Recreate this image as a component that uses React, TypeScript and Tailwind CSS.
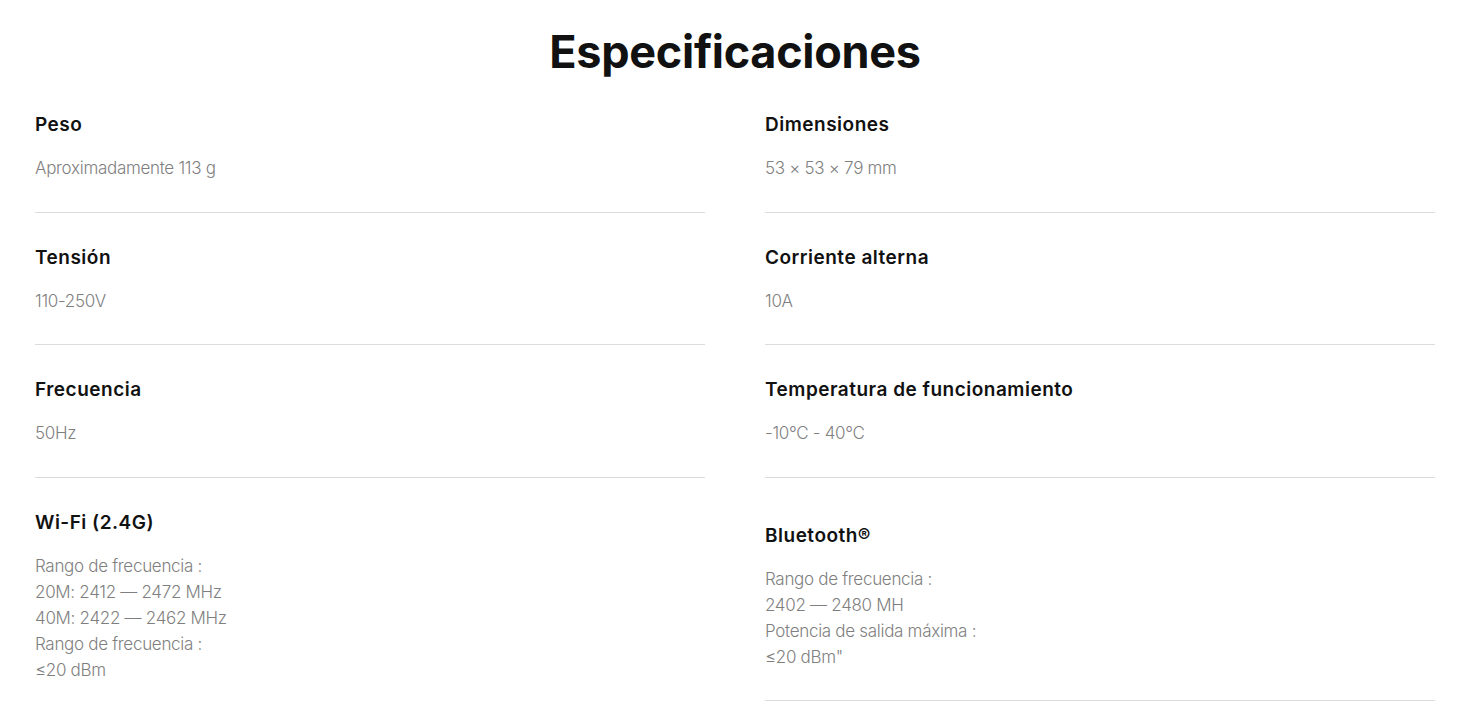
const specs = [
  { label: "Peso", lines: ["Aproximadamente 113 g"] },
  { label: "Dimensiones", lines: ["53 × 53 × 79 mm"] },
  { label: "Tensión", lines: ["110-250V"] },
  { label: "Corriente alterna", lines: ["10A"] },
  { label: "Frecuencia", lines: ["50Hz"] },
  { label: "Temperatura de funcionamiento", lines: ["-10°C - 40°C"] },
  {
    label: "Wi-Fi (2.4G)",
    lines: [
      "Rango de frecuencia :",
      "20M: 2412 — 2472 MHz",
      "40M: 2422 — 2462 MHz",
      "Rango de frecuencia :",
      "≤20 dBm",
    ],
  },
  {
    label: "Bluetooth®",
    lines: [
      "Rango de frecuencia :",
      "2402 — 2480 MH",
      "Potencia de salida máxima :",
      '≤20 dBm"',
    ],
  },
];

export default function App() {
  return (
    <div className="min-h-screen bg-white font-['Inter',sans-serif]">
      <div className="w-[1470px]">
        <div className="w-[1400px] mx-auto pt-6">
          <h2 className="text-center text-[45px] leading-[56px] font-bold text-[#111] tracking-[-0.3px]">
            Especificaciones
          </h2>

          <div className="grid grid-cols-2 gap-x-[60px] items-center">
            {specs.map((spec) => (
              <div
                key={spec.label}
                className="pt-8 pb-[30.5px] border-b border-[#dcdcdc]"
              >
                {/* Label */}
                <h3 className="text-[19px] leading-[26px] font-semibold text-[#111] tracking-[0.5px] mb-[17px]">
                  {spec.label}
                </h3>
                {/* Value */}
                <div className="text-[17px] leading-[26px] font-light text-[#7f7f7f] tracking-[-0.3px]">
                  {spec.lines.map((line, i) => (
                    <p key={i}>{line}</p>
                  ))}
                </div>
              </div>
            ))}
          </div>
        </div>
      </div>
    </div>
  );
}
